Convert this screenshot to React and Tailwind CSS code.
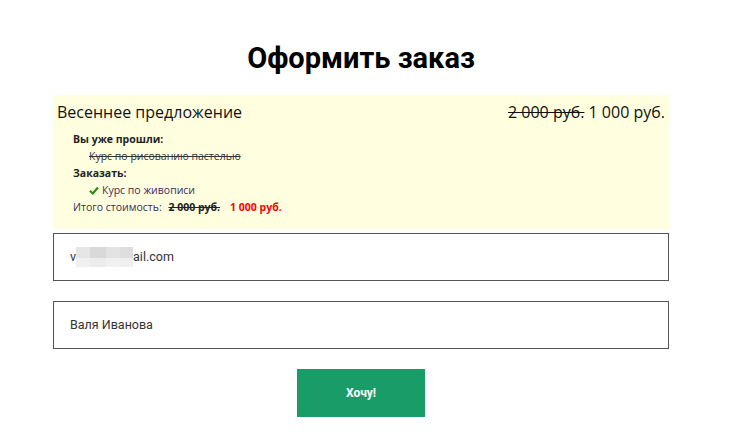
export default function App() {
  return (
    <div className="min-h-[445px] bg-white font-['Open_Sans',sans-serif]">
      <div className="ml-[53px] w-[616px] pt-[38px]">
        <h1 className="text-center font-['Roboto',sans-serif] text-[29px] font-bold leading-[40px] text-black">
          Оформить заказ
        </h1>

        <div className="mt-[17px] h-[134px] bg-[#ffffe0] px-[4px] pt-[5px]">
          <div className="flex items-baseline justify-between text-[16px] leading-[24px] text-[#111]">
            <span>Весеннее предложение</span>
            <span>
              <span className="line-through">2 000 руб.</span> 1 000 руб.
            </span>
          </div>
          <div className="mt-[7px] pl-[16px] text-[10.5px] leading-[17px] text-[#222]">
            <div className="font-bold">Вы уже прошли:</div>
            <div className="pl-[16px] text-[#333] line-through">Курс по рисованию пастелью</div>
            <div className="font-bold">Заказать:</div>
            <div className="flex items-center gap-[3px] pl-[16px] text-[#3c2a55]">
              <svg width="10" height="9" viewBox="0 0 10 9">
                <path d="M1 4.8 L3.8 7.5 L9 1.5" fill="none" stroke="#2e8b1e" strokeWidth="2.2" />
              </svg>
              <span>Курс по живописи</span>
            </div>
            <div className="text-[#3c2a55]">
              Итого стоимость:{' '}
              <span className="ml-[4px] font-bold text-[#222] line-through">2 000 руб.</span>
              <span className="ml-[10px] font-bold text-[#ff0000]">1 000 руб.</span>
            </div>
          </div>
        </div>

        <div className="mt-[4px] flex h-[48px] items-center border border-[#555] pl-[16px] font-['Roboto',sans-serif] text-[12.5px] text-[#333]">
          <span>v</span>
          <span className="inline-flex h-[20px] w-[57px] flex-col">
            <span className="flex h-[11px]">
              <span className="w-[14px] bg-[#e6e6e6]" />
              <span className="w-[16px] bg-[#d9d9d9]" />
              <span className="w-[14px] bg-[#e3e3e3]" />
              <span className="w-[13px] bg-[#dedede]" />
            </span>
            <span className="flex h-[9px]">
              <span className="w-[14px] bg-[#f0f0f0]" />
              <span className="w-[16px] bg-[#ececec]" />
              <span className="w-[14px] bg-[#f1f1f1]" />
              <span className="w-[13px] bg-[#efefef]" />
            </span>
          </span>
          <span>ail.com</span>
        </div>

        <div className="mt-[20px] flex h-[48px] items-center border border-[#555] pl-[16px] font-['Roboto',sans-serif] text-[12.5px] text-[#333]">
          Валя Иванова
        </div>

        <div className="mt-[20px] flex justify-center">
          <button className="h-[48px] w-[128px] bg-[#1a9c69] font-['Roboto',sans-serif] text-[12px] font-bold text-white">
            Хочу!
          </button>
        </div>
      </div>
    </div>
  )
}
